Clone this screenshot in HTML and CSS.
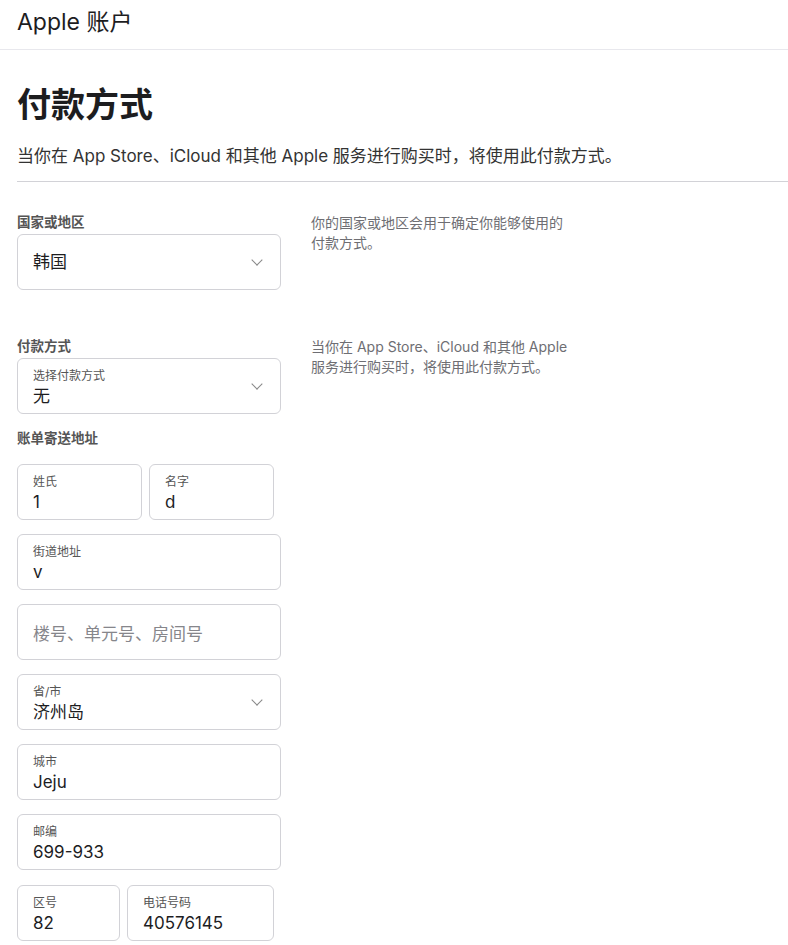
FILE: index.html
```html
<!DOCTYPE html>
<html lang="zh-CN">
<head>
    <meta charset="UTF-8">
    <meta name="viewport" content="width=device-width, initial-scale=1.0">
    <title>付款方式</title>
    <link rel="stylesheet" href="styles.css">
</head>
<body>
    <header class="top-bar">Apple 账户</header>
    <div class="page">
        <h1>付款方式</h1>
        <p class="intro">当你在 App Store、iCloud 和其他 Apple 服务进行购买时，将使用此付款方式。</p>
        <hr class="divider">

        <div class="row first">
            <div class="col">
                <div class="section-label">国家或地区</div>
                <div class="field select single">
                    <span class="value">韩国</span>
                    <span class="chevron"></span>
                </div>
            </div>
            <p class="help">你的国家或地区会用于确定你能够使用的付款方式。</p>
        </div>

        <div class="row second">
            <div class="col">
                <div class="section-label">付款方式</div>
                <div class="field select">
                    <span class="label">选择付款方式</span>
                    <span class="value">无</span>
                    <span class="chevron"></span>
                </div>
                <div class="section-label billing">账单寄送地址</div>
                <div class="fields">
                    <div class="pair names">
                        <div class="field"><span class="label">姓氏</span><span class="value">1</span></div>
                        <div class="field"><span class="label">名字</span><span class="value">d</span></div>
                    </div>
                    <div class="field wide"><span class="label">街道地址</span><span class="value">v</span></div>
                    <div class="field wide single"><span class="placeholder">楼号、单元号、房间号</span></div>
                    <div class="field wide select">
                        <span class="label">省/市</span>
                        <span class="value">济州岛</span>
                        <span class="chevron"></span>
                    </div>
                    <div class="field wide"><span class="label">城市</span><span class="value">Jeju</span></div>
                    <div class="field wide"><span class="label">邮编</span><span class="value">699-933</span></div>
                    <div class="pair phone">
                        <div class="field"><span class="label">区号</span><span class="value">82</span></div>
                        <div class="field"><span class="label">电话号码</span><span class="value">40576145</span></div>
                    </div>
                </div>
            </div>
            <p class="help">当你在 App Store、iCloud 和其他 Apple 服务进行购买时，将使用此付款方式。</p>
        </div>
    </div>
</body>
</html>
```

FILE: styles.css
```css
body { margin: 0; font-family: "Inter", "Noto Sans CJK SC", sans-serif; color: #1d1d1f; background: #fff; }
.top-bar { height: 49px; line-height: 44px; padding-left: 17px; font-size: 23px; border-bottom: 1px solid #e8e8ed; }
.page { padding-left: 17px; }
h1 { margin: 33px 0 0; font-size: 34px; line-height: 44px; font-weight: 700; }
.intro { margin: 17px 0 0; font-size: 17px; line-height: 24px; color: #333; }
.divider { margin: 13px 0 0; border: 0; border-top: 1px solid #d2d2d7; height: 0; }
.row { display: grid; grid-template-columns: 264px 262px; column-gap: 30px; }
.row.first { padding-top: 31px; }
.row.second { padding-top: 47px; }
.help { margin: 0; font-size: 14px; line-height: 20px; color: #6e6e73; }
.section-label { font-size: 13.5px; line-height: 18px; font-weight: 700; color: #555; margin-bottom: 3px; }
.section-label.billing { margin-top: 15px; margin-bottom: 17px; }
.fields { display: flex; flex-direction: column; gap: 14px; }
.pair { display: flex; gap: 7px; width: 257px; }
.phone { margin-top: 1px; }
.names .field { flex: 1; }
.phone .field:first-child { width: 103px; }
.phone .field:last-child { flex: 1; }
.field { position: relative; box-sizing: border-box; height: 56px; border: 1px solid #d2d2d7; border-radius: 6px; padding: 9px 15px 0; display: flex; flex-direction: column; }
.field.single { justify-content: center; padding-top: 0; }
.field .label { font-size: 12px; line-height: 16px; color: #555; }
.field .value { font-size: 17px; line-height: 24px; color: #1d1d1f; }
.field .placeholder { font-size: 17px; color: #86868b; }
.chevron { position: absolute; right: 19px; top: 24px; width: 7px; height: 7px; border-right: 1px solid #888; border-bottom: 1px solid #888; transform: rotate(45deg); margin-top: -3px; }
```
